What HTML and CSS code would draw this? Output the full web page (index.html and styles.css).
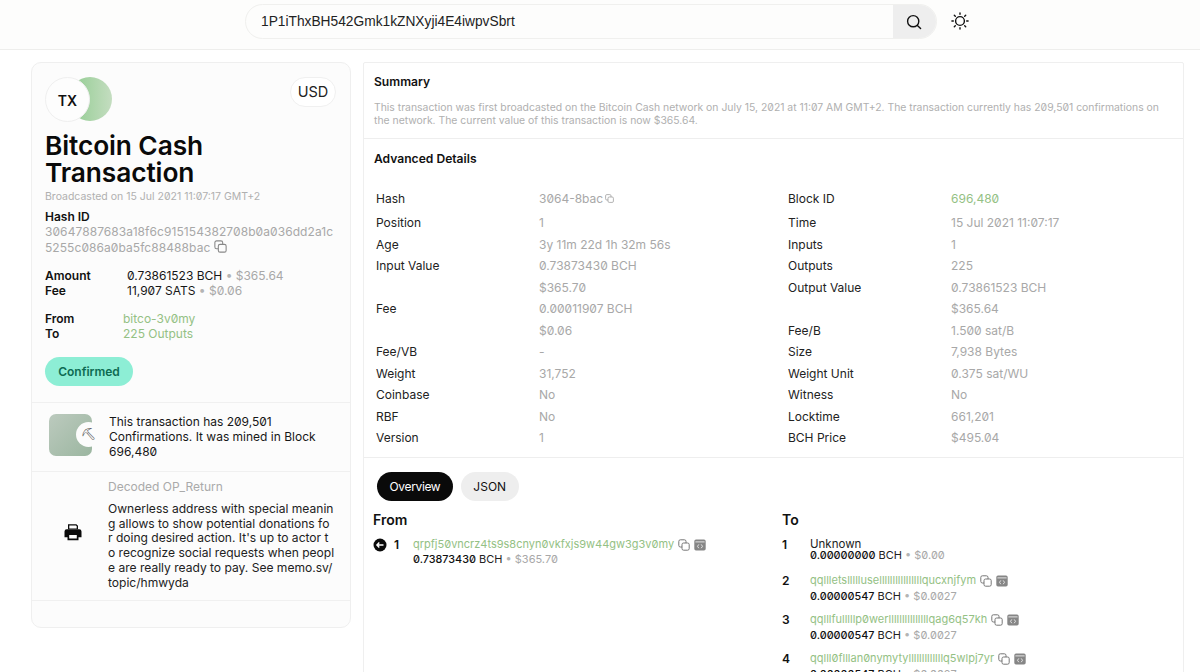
FILE: index.html
```html
<!DOCTYPE html>
<html lang="en">
<head>
<meta charset="utf-8">
<title>Bitcoin Cash Transaction</title>
<link rel="stylesheet" href="styles.css">
</head>
<body>
<svg class="defs" width="0" height="0" aria-hidden="true">
  <symbol id="copy" viewBox="0 0 12 12"><rect x="4" y="4" width="7.2" height="7.2" rx="1.6" fill="none" stroke="currentColor" stroke-width="1"/><path d="M8 4V2.400A1.600 1.600 0 0 0 6.400.8H2.400A1.600 1.600 0 0 0 .8 2.400v4A1.600 1.600 0 0 0 2.400 8H4" fill="none" stroke="currentColor" stroke-width="1"/></symbol>
  <symbol id="code" viewBox="0 0 12 12"><path fill="#868686" d="M2 .5h8A1.700 1.700 0 0 1 11.700 2.200v7.600A1.700 1.700 0 0 1 10 11.500H2A1.700 1.700 0 0 1 .3 9.800V2.200A1.700 1.700 0 0 1 2 .5z"/><rect x="1.400" y="2.400" width="9.200" height="1" fill="#e4e4e4"/><path d="M4.800 5.400 3.500 7.300l1.300 1.900M7.200 5.400l1.300 1.900-1.300 1.900" stroke="#eee" stroke-width=".9" fill="none"/></symbol>
</svg>
<header class="topbar">
  <div class="search">
    <div class="search-text">1P1iThxBH542Gmk1kZNXyji4E4iwpvSbrt</div>
    <div class="search-btn">
      <svg width="16" height="16" viewBox="0 0 16 16" fill="none" stroke="#111" stroke-width="1.4" stroke-linecap="round"><circle cx="7.2" cy="7.2" r="5.6"/><path d="m11.400 11.400 3.200 3.200"/></svg>
    </div>
  </div>
  <svg class="sun" width="18" height="18" viewBox="0 0 18 18" fill="none" stroke="#111" stroke-width="1.4" stroke-linecap="round"><circle cx="9" cy="9" r="4.400"/><path d="M9 .9v1.400M9 15.700v1.400M.9 9h1.400M15.700 9h1.400M3.300 3.300l1 1M13.700 13.700l1 1M3.300 14.700l1-1M13.700 4.300l1-1"/></svg>
</header>
<main class="page">
  <aside class="card">
    <section class="card-top">
      <div class="badge-row">
        <div class="tx-logo"><span class="tx-moon"></span><span class="tx-disc">TX</span></div>
        <div class="currency">USD</div>
      </div>
      <h1 class="title">Bitcoin Cash Transaction</h1>
      <p class="broadcast">Broadcasted on 15 Jul 2021 11:07:17 GMT+2</p>
      <div class="hash-label">Hash ID</div>
      <div class="hash-value">30647887683a18f6c915154382708b0a036dd2a1c 5255c086a0ba5fc88488bac <svg class="hash-copy" width="13" height="13"><use href="#copy"/></svg></div>
      <dl class="pairs amounts">
        <dt>Amount</dt><dd>0.73861523 BCH <i>•</i> <span class="muted">$365.64</span></dd>
        <dt>Fee</dt><dd>11,907 SATS <i>•</i> <span class="muted">$0.06</span></dd>
      </dl>
      <dl class="pairs parties">
        <dt>From</dt><dd class="link">bitco-3v0my</dd>
        <dt>To</dt><dd class="link">225 Outputs</dd>
      </dl>
      <div class="status">Confirmed</div>
    </section>
    <section class="mined">
      <div class="mined-art"><span class="mined-block"></span><span class="mined-pick">⛏</span></div>
      <p>This transaction has 209,501 Confirmations. It was mined in Block 696,480</p>
    </section>
    <section class="opreturn">
      <div class="printer">
        <svg width="18" height="18" viewBox="0 0 18 18"><path fill="#0a0a0a" d="M4 1.200h8.400L14 2.800v3.400H4zM5.300 2.500v3h7.400V3.300l-.8-.8z"/><path fill="#0a0a0a" d="M2.800 6.200h12.400A2.300 2.300 0 0 1 17.500 8.500v5.700h-3v3.100h-11v-3.100h-3V8.500a2.300 2.300 0 0 1 2.300-2.300zM5.200 12v3.500h7.600V12z"/></svg>
      </div>
      <div class="op-body">
        <div class="op-title">Decoded OP_Return</div>
        <p class="op-text">Ownerless address with special meanin<br>g allows to show potential donations fo<br>r doing desired action. It's up to actor t<br>o recognize social requests when peopl<br>e are really ready to pay. See memo.sv/<br>topic/hmwyda</p>
      </div>
    </section>
    <div class="card-foot"></div>
  </aside>

  <div class="panel">
    <section class="summary">
      <h2>Summary</h2>
      <p>This transaction was first broadcasted on the Bitcoin Cash network on July 15, 2021 at 11:07 AM GMT+2. The transaction currently has 209,501 confirmations on the network. The current value of this transaction is now $365.64.</p>
    </section>
    <section class="advanced">
      <h2>Advanced Details</h2>
      <div class="details">
        <dl class="detail-col">
          <dt class="first">Hash</dt><dd class="first">3064-8bac<svg class="mini-copy" width="9" height="9"><use href="#copy"/></svg></dd>
          <dt>Position</dt><dd>1</dd>
          <dt>Age</dt><dd>3y 11m 22d 1h 32m 56s</dd>
          <dt>Input Value</dt><dd>0.73873430 BCH</dd>
          <dt></dt><dd>$365.70</dd>
          <dt>Fee</dt><dd>0.00011907 BCH</dd>
          <dt></dt><dd>$0.06</dd>
          <dt>Fee/VB</dt><dd>-</dd>
          <dt>Weight</dt><dd>31,752</dd>
          <dt>Coinbase</dt><dd>No</dd>
          <dt>RBF</dt><dd>No</dd>
          <dt>Version</dt><dd>1</dd>
        </dl>
        <dl class="detail-col">
          <dt class="first">Block ID</dt><dd class="first link">696,480</dd>
          <dt>Time</dt><dd>15 Jul 2021 11:07:17</dd>
          <dt>Inputs</dt><dd>1</dd>
          <dt>Outputs</dt><dd>225</dd>
          <dt>Output Value</dt><dd>0.73861523 BCH</dd>
          <dt></dt><dd>$365.64</dd>
          <dt>Fee/B</dt><dd>1.500 sat/B</dd>
          <dt>Size</dt><dd>7,938 Bytes</dd>
          <dt>Weight Unit</dt><dd>0.375 sat/WU</dd>
          <dt>Witness</dt><dd>No</dd>
          <dt>Locktime</dt><dd>661,201</dd>
          <dt>BCH Price</dt><dd>$495.04</dd>
        </dl>
      </div>
    </section>
    <section class="flows">
      <div class="tabs"><span class="tab tab-on">Overview</span><span class="tab">JSON</span></div>
      <div class="flow-cols">
        <div class="flow-col">
          <h3>From</h3>
          <div class="flow-row">
            <svg class="arrow" width="14" height="14" viewBox="0 0 14 14"><circle cx="7" cy="7" r="6.500" fill="#0a0a0a"/><path d="M10.500 7H4M6.300 4.600 3.900 7l2.400 2.400" stroke="#fff" stroke-width="1.400" fill="none"/></svg>
            <span class="num">1</span>
            <div>
              <div class="addr"><span class="link">qrpfj50vncrz4ts9s8cnyn0vkfxjs9w44gw3g3v0my</span><svg class="ico" width="12" height="12"><use href="#copy"/></svg><svg class="ico" width="12" height="12"><use href="#code"/></svg></div>
              <div class="amt"><b>0.73873430</b> BCH <i>•</i> <span class="muted">$365.70</span></div>
            </div>
          </div>
        </div>
        <div class="flow-col to-col">
          <h3>To</h3>
          <div class="flow-row first-to">
            <span class="num">1</span>
            <div>
              <div class="unknown">Unknown</div>
              <div class="amt tight"><b>0.00000000</b> BCH <i>•</i> <span class="muted">$0.00</span></div>
            </div>
          </div>
          <div class="flow-row">
            <span class="num">2</span>
            <div>
              <div class="addr"><span class="link">qqllletslllllusellllllllllllllllqucxnjfym</span><svg class="ico" width="12" height="12"><use href="#copy"/></svg><svg class="ico" width="12" height="12"><use href="#code"/></svg></div>
              <div class="amt"><b>0.00000547</b> BCH <i>•</i> <span class="muted">$0.0027</span></div>
            </div>
          </div>
          <div class="flow-row">
            <span class="num">3</span>
            <div>
              <div class="addr"><span class="link">qqlllfulllllp0werlllllllllllllllqag6q57kh</span><svg class="ico" width="12" height="12"><use href="#copy"/></svg><svg class="ico" width="12" height="12"><use href="#code"/></svg></div>
              <div class="amt"><b>0.00000547</b> BCH <i>•</i> <span class="muted">$0.0027</span></div>
            </div>
          </div>
          <div class="flow-row">
            <span class="num">4</span>
            <div>
              <div class="addr"><span class="link">qqlll0flllan0nymytylllllllllllllq5wlpj7yr</span><svg class="ico" width="12" height="12"><use href="#copy"/></svg><svg class="ico" width="12" height="12"><use href="#code"/></svg></div>
              <div class="amt"><b>0.00000547</b> BCH <i>•</i> <span class="muted">$0.0027</span></div>
            </div>
          </div>
        </div>
      </div>
    </section>
  </div>
</main>
</body>
</html>
```

FILE: styles.css
```css
* { box-sizing: border-box; }
html, body { height: 100%; }
body {
  margin: 0;
  overflow: hidden;
  background: #fff;
  color: #171717;
  font-family: Inter, "Liberation Sans", sans-serif;
  font-size: 12px;
  line-height: 15px;
  font-feature-settings: "zero" 1;
}
h1, h2, h3, p, dl, dd { margin: 0; }
i { font-style: normal; color: #b4b4b4; }
.defs { position: absolute; }
.muted { color: #a8a8a8; }
.link { color: #94c184; }

.topbar {
  height: 50px;
  display: flex;
  align-items: flex-start;
  padding: 4px 0 0 245px;
  gap: 14px;
  background: #fdfdfc;
  border-bottom: 1px solid #eeeeec;
}
.search {
  width: 692px;
  height: 35px;
  display: flex;
  border: 1px solid #f0f0ee;
  border-radius: 18px;
  overflow: hidden;
  background: #fdfdfc;
}
.search-text {
  flex: 1;
  padding: 9px 0 0 15px;
  font-family: "Liberation Sans", Arial, sans-serif;
  font-size: 13.750px;
  line-height: 16px;
  font-feature-settings: normal;
  color: #222;
}
.search-btn {
  width: 44px;
  margin: -1px;
  background: #eeeeee;
  display: flex;
  align-items: center;
  justify-content: center;
  padding-right: 3px;
}
.sun { margin-top: 8px; }

.page {
  display: flex;
  align-items: flex-start;
  gap: 12px;
  padding: 12px 16px 0 31px;
}

.card {
  width: 320px;
  flex: none;
  background: #fcfcfc;
  border: 1px solid #efefef;
  border-radius: 10px;
  overflow: hidden;
}
.card-top { padding: 14px 14px 15px 13px; border-bottom: 1px solid #f0f0f0; height: 340px; }
.badge-row { display: flex; justify-content: space-between; align-items: flex-start; }
.tx-logo { position: relative; width: 67px; height: 44px; }
.tx-moon {
  position: absolute;
  left: 23px;
  top: 0;
  width: 44px;
  height: 44px;
  border-radius: 50%;
  background: linear-gradient(90deg, #8ecb8e, #c4ddc0);
}
.tx-disc {
  position: absolute;
  left: 0;
  top: 0;
  width: 45px;
  height: 45px;
  border-radius: 50%;
  background: #fdfdfd;
  border: 1px solid #efefef;
  display: flex;
  align-items: center;
  justify-content: center;
  font-weight: 600;
  font-size: 14px;
  padding-top: 1px;
  color: #111;
}
.currency {
  width: 46px;
  height: 30px;
  border: 1px solid #f0f0f0;
  border-radius: 15px;
  background: #fff;
  font-size: 14.500px;
  line-height: 27px;
  text-align: center;
  color: #222;
}
.title {
  margin-top: 11px;
  font-size: 26.300px;
  line-height: 27px;
  font-weight: 600;
  color: #0a0a0a;
  letter-spacing: -.1px;
  width: 200px;
}
.broadcast { margin-top: 3px; font-size: 10.500px; line-height: 16px; color: #b0b0b0; }
.hash-label { margin-top: 4px; font-weight: 600; font-size: 12px; line-height: 16px; color: #111; }
.hash-value { width: 292px; word-break: break-all; font-size: 12px; line-height: 14.500px; color: #a8a8a8; letter-spacing: .07px; }
.hash-copy { color: #888; vertical-align: -1px; }

.pairs { display: grid; }
.pairs dt { font-weight: 600; color: #111; }
.amounts { margin-top: 13px; grid-template-columns: 82px 1fr; }
.parties { margin-top: 13px; grid-template-columns: 78px 1fr; }
.status {
  display: inline-block;
  margin-top: 16px;
  width: 88px;
  height: 29px;
  border-radius: 15px;
  background: #8deed5;
  color: #0d6b52;
  font-weight: 600;
  line-height: 29px;
  text-align: center;
}

.mined { display: flex; gap: 12px; padding: 11px 14px 0 16px; border-bottom: 1px solid #f0f0f0; height: 69px; }
.mined p { width: 225px; }
.mined-art { position: relative; width: 49px; height: 43px; flex: none; margin-top: -1px; }
.mined-block { position: absolute; left: 1px; top: 1px; width: 43px; height: 42px; border-radius: 7px; background: linear-gradient(135deg, #bccabe, #9bb6a0); }
.mined-pick {
  position: absolute;
  left: 28px;
  top: 9px;
  width: 25px;
  height: 25px;
  border-radius: 50%;
  background: #fcfcfc;
  color: #555;
  font-family: "DejaVu Sans", sans-serif;
  font-size: 12px;
  line-height: 25px;
  text-align: center;
}

.opreturn { display: flex; height: 129px; border-bottom: 1px solid #f0f0f0; padding: 7px 0 0 0; }
.printer { width: 76px; flex: none; padding: 44px 0 0 32px; }
.op-body { width: 232px; }
.op-title { color: #aaa; line-height: 16px; font-size: 12px; }
.op-text { margin-top: 7px; color: #222; font-size: 12.050px; line-height: 14.700px; white-space: nowrap; font-feature-settings: normal; }
.card-foot { height: 26px; }

.panel {
  flex: 1;
  min-height: 700px;
  background: #fff;
  border: 1px solid #efefef;
  border-radius: 2px;
}
.summary { padding: 11px 10px 10px; border-bottom: 1px solid #eeeeee; height: 76px; }
.summary h2, .advanced h2 { font-size: 12.100px; line-height: 15px; font-weight: 600; color: #111; }
.summary p { margin-top: 12px; font-size: 10.400px; line-height: 13px; color: #b0b0b0; }
.advanced { padding: 12px 10px 0; height: 319px; border-bottom: 1px solid #eeeeee; }
.details { display: grid; grid-template-columns: 412px 1fr; margin-top: 25px; padding-left: 2px; }
.detail-col { display: grid; grid-template-columns: 163px 1fr; grid-template-rows: 24px; grid-auto-rows: 21.500px; align-content: start; }
.detail-col dt { color: #222; }
.detail-col dd { color: #a8a8a8; }
.detail-col dd.link { color: #94c184; }
.mini-copy { margin-left: 2px; color: #999; }

.flows { padding: 14px 14px 0 9px; }
.tabs { display: flex; gap: 8px; padding-left: 4px; }
.tab {
  height: 29px;
  border-radius: 15px;
  padding: 0 12.500px;
  line-height: 29px;
  background: #eeeeee;
  font-size: 12px;
  color: #111;
}
.tab-on { background: #0a0a0a; color: #fff; letter-spacing: -.35px; }
.flow-cols { display: grid; grid-template-columns: 409px 1fr; margin-top: 10px; }
.flow-col h3 { font-size: 14px; line-height: 17px; font-weight: 600; color: #111; }
.flow-row { display: flex; margin-top: 9px; }
.arrow { margin: 1px 7px 0 0; }
.num { font-weight: 600; font-size: 12px; color: #111; width: 19px; flex: none; }
.to-col .num { width: 28px; }
.to-col .flow-row { margin-top: 8px; }
.to-col .amt { margin-top: 1px; }
.to-col .first-to { margin-top: 9px; margin-bottom: 12px; }
.addr { display: flex; align-items: center; gap: 4px; font-size: 11px; line-height: 15px; }
.ico { color: #777; }
.amt { font-size: 11px; line-height: 15px; color: #222; }
.amt b { font-weight: 450; font-size: 10.800px; color: #111; }
.to-col .amt.tight { line-height: 11px; margin-top: 0; }
.unknown { font-size: 11.500px; line-height: 11px; padding-top: 2px; color: #222; }
```
